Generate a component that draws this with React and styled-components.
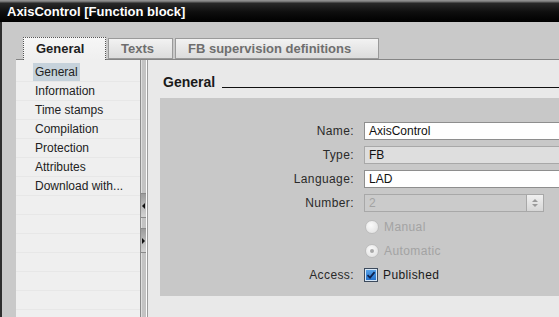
import React from 'react';
import styled, { createGlobalStyle } from 'styled-components';

const GlobalStyle = createGlobalStyle`
  html, body {
    margin: 0;
    padding: 0;
    overflow: hidden;
    background: #c9c9c9;
  }
  * {
    box-sizing: border-box;
  }
`;

const Window = styled.div`
  width: 559px;
  height: 317px;
  display: flex;
  flex-direction: column;
  overflow: hidden;
  font-family: 'Liberation Sans', Arial, sans-serif;
  font-size: 12px;
  color: #222;
`;

const TitleBar = styled.div`
  flex: none;
  height: 22px;
  padding: 2px 0 0 7px;
  line-height: 19px;
  font-size: 13px;
  font-weight: bold;
  color: #fff;
  white-space: nowrap;
  background: linear-gradient(
    to bottom,
    #9a9a9a 0,
    #6a6a6a 2px,
    #2a2a2a 3px,
    #0e0e0e 12px,
    #000 100%
  );
`;

const Body = styled.div`
  flex: 1;
  min-height: 0;
  display: flex;
  flex-direction: column;
  padding-top: 15px;
  background: #c9c9c9;
  border-left: 2px solid #2e2e2e;
`;

const TabStrip = styled.div`
  flex: none;
  display: flex;
  align-items: flex-end;
  gap: 2px;
  height: 23px;
  margin-left: 14px;
  padding-left: 7px;
  border-bottom: 1px solid #858585;
`;

const Tab = styled.div`
  width: ${(p) => p.$width}px;
  height: ${(p) => (p.$active ? 23 : 21)}px;
  margin-bottom: ${(p) => (p.$active ? '-1px' : '0')};
  padding: ${(p) => (p.$active ? '2px' : '1px')} 0 0 12px;
  line-height: 17px;
  font-size: 13px;
  font-weight: bold;
  white-space: nowrap;
  color: ${(p) => (p.$active ? '#1e1e1e' : '#6e6e6e')};
  background: ${(p) =>
    p.$active
      ? 'linear-gradient(to bottom, #f6f6f6, #efefef)'
      : 'linear-gradient(to bottom, #f2f2f2, #dcdcdc)'};
  border: 1px ${(p) => (p.$active ? 'dotted #555' : 'solid #9a9a9a')};
  border-bottom: ${(p) => (p.$active ? 'none' : '1px solid #9a9a9a')};
`;

const Content = styled.div`
  flex: 1;
  min-height: 0;
  display: flex;
  margin-left: 14px;
`;

const Nav = styled.div`
  flex: none;
  width: 124px;
  padding-top: 3px;
  background: repeating-linear-gradient(
    to bottom,
    #efefef 0,
    #efefef 18px,
    #e7e7e7 18px,
    #e7e7e7 19px
  );
  background-position: 0 3px;
`;

const NavItem = styled.div`
  height: 19px;
  padding-left: 17px;
  line-height: 18px;
  white-space: nowrap;
`;

const NavLabel = styled.span`
  display: inline-block;
  padding: 0 2px;
  background: ${(p) => (p.$selected ? '#c6d2db' : 'transparent')};
`;

const Splitter = styled.div`
  flex: none;
  width: 7px;
  display: flex;
  flex-direction: column;
  gap: 10px;
  padding-top: 133px;
  background: #c3c3c3;
  border-left: 1px solid #8c8c8c;
  border-right: 1px solid #fbfbfb;
  box-shadow: inset 1px 0 0 #dedede;
`;

const SplitButton = styled.div`
  height: 25px;
  display: flex;
  align-items: center;
  justify-content: center;
  background: linear-gradient(to bottom, #9c9c9c, #b9b9b9 50%, #d2d2d2);
  border-top: 1px solid #8a8a8a;
  border-bottom: 1px solid #8a8a8a;

  &::after {
    content: '';
    width: 0;
    height: 0;
    border-top: 3px solid transparent;
    border-bottom: 3px solid transparent;
    ${(p) =>
      p.$dir === 'left'
        ? 'border-right: 3px solid #111;'
        : 'border-left: 3px solid #111;'}
  }
`;

const Main = styled.div`
  flex: 1;
  min-width: 0;
  display: flex;
  flex-direction: column;
  padding: 14px 0 0 12px;
  background: #e9e9e9;
  border-left: 1px solid #9c9c9c;
`;

const Heading = styled.div`
  display: flex;
  align-items: flex-end;
  height: 16px;
  padding-left: 3px;
`;

const HeadingText = styled.span`
  font-size: 14px;
  font-weight: bold;
  line-height: 16px;
  color: #1a1a1a;
`;

const HeadingRule = styled.div`
  flex: 1;
  height: 1px;
  margin: 0 0 2px 7px;
  background: #111;
`;

const Panel = styled.div`
  flex: none;
  height: 198px;
  margin-top: 8px;
  padding-top: 24px;
  display: grid;
  grid-template-columns: 194px 240px;
  grid-auto-rows: 18px;
  column-gap: 10px;
  row-gap: 6px;
  align-content: start;
  background: #c8c8c8;
`;

const Label = styled.div`
  grid-column: 1;
  text-align: right;
  line-height: 18px;
  letter-spacing: 0.4px;
  color: #2a2a2a;
`;

const Field = styled.div`
  grid-column: 2;
  width: ${(p) => p.$width || 240}px;
  height: 18px;
  display: flex;
  align-items: center;
  padding-left: 4px;
  line-height: 16px;
  color: ${(p) => (p.$disabled ? '#a3a3a3' : '#111')};
  background: ${(p) =>
    p.$disabled ? '#cbcbcb' : p.$readOnly ? '#dedede' : '#fff'};
  border: 1px solid ${(p) => (p.$readOnly || p.$disabled ? '#a8a8a8' : '#8e8e8e')};
`;

const FieldText = styled.span`
  flex: 1;
`;

const Spinner = styled.div`
  width: 17px;
  height: 16px;
  display: flex;
  flex-direction: column;
  align-items: center;
  justify-content: center;
  gap: 2px;
  background: linear-gradient(to bottom, #f0f0f0, #d6d6d6);
  border-left: 1px solid #a8a8a8;
`;

const SpinArrow = styled.div`
  width: 0;
  height: 0;
  border-left: 3px solid transparent;
  border-right: 3px solid transparent;
  ${(p) =>
    p.$up
      ? 'border-bottom: 3px solid #9a9a9a;'
      : 'border-top: 3px solid #9a9a9a;'}
`;

const Option = styled.div`
  grid-column: 2;
  display: flex;
  align-items: center;
  gap: 5px;
  line-height: 18px;
  letter-spacing: 0.4px;
  color: ${(p) => (p.$disabled ? '#a3a3a3' : '#1a1a1a')};
`;

const Radio = styled.span`
  width: 14px;
  height: 14px;
  margin-left: 1px;
  display: flex;
  align-items: center;
  justify-content: center;
  border-radius: 50%;
  border: 1px solid #bdbdbd;
  background: radial-gradient(circle at 40% 35%, #fafafa, #dedede);

  &::after {
    content: '';
    width: 4px;
    height: 4px;
    border-radius: 50%;
    background: ${(p) => (p.$checked ? '#a9a9a9' : 'transparent')};
  }
`;

const Check = styled.span`
  width: 14px;
  height: 14px;
  display: flex;
  align-items: center;
  justify-content: center;
  border: 1px solid #3c4a5c;
  box-shadow: inset 0 0 0 1px #d7e6f5;
  background: linear-gradient(to bottom, #5aa6ec, #1f6cc9);
`;

const nav = [
  'General',
  'Information',
  'Time stamps',
  'Compilation',
  'Protection',
  'Attributes',
  'Download with...',
];

const App = () => {
  return (
    <Window>
      <GlobalStyle />
      <TitleBar>AxisControl [Function block]</TitleBar>
      <Body>
        <TabStrip>
          <Tab $active $width={83}>
            General
          </Tab>
          <Tab $width={65}>Texts</Tab>
          <Tab $width={204}>FB supervision definitions</Tab>
        </TabStrip>

        <Content>
          <Nav>
            {nav.map((item, i) => (
              <NavItem key={item}>
                <NavLabel $selected={i === 0}>{item}</NavLabel>
              </NavItem>
            ))}
          </Nav>

          <Splitter>
            <SplitButton $dir='left' />
            <SplitButton $dir='right' />
          </Splitter>

          <Main>
            <Heading>
              <HeadingText>General</HeadingText>
              <HeadingRule />
            </Heading>

            <Panel>
              <Label>Name:</Label>
              <Field>AxisControl</Field>

              <Label>Type:</Label>
              <Field $readOnly>FB</Field>

              <Label>Language:</Label>
              <Field>LAD</Field>

              <Label>Number:</Label>
              <Field $disabled $width={180}>
                <FieldText>2</FieldText>
                <Spinner>
                  <SpinArrow $up />
                  <SpinArrow />
                </Spinner>
              </Field>

              <Option $disabled>
                <Radio />
                Manual
              </Option>
              <Option $disabled>
                <Radio $checked />
                Automatic
              </Option>

              <Label>Access:</Label>
              <Option>
                <Check>
                  <svg width='10' height='10' viewBox='0 0 10 10'>
                    <path
                      d='M1.5 5.2 L4 7.7 L8.6 2.2'
                      fill='none'
                      stroke='#0d2350'
                      strokeWidth='1.8'
                    />
                  </svg>
                </Check>
                Published
              </Option>
            </Panel>
          </Main>
        </Content>
      </Body>
    </Window>
  );
};

export default App;
